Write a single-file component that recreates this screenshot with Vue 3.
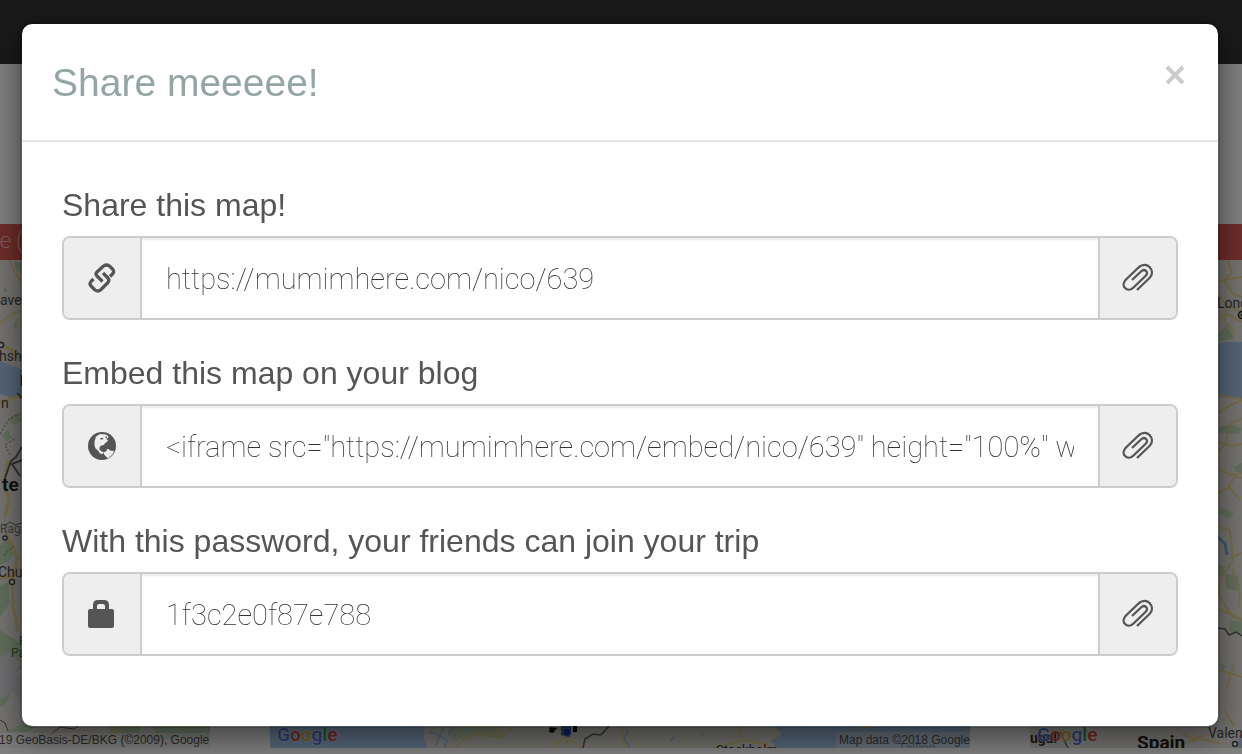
<script setup>
import { reactive } from 'vue'

const fields = reactive([
  { id: 'share', label: 'Share this map!', icon: 'link', value: 'https://mumimhere.com/nico/639' },
  {
    id: 'embed',
    label: 'Embed this map on your blog',
    icon: 'globe',
    value: '<iframe src="https://mumimhere.com/embed/nico/639" height="100%" width="100%"></iframe>'
  },
  { id: 'password', label: 'With this password, your friends can join your trip', icon: 'lock', value: '1f3c2e0f87e788' }
])
</script>

<template>
  <div class="page">
    <div class="nav"></div>
    <div class="intro"></div>
    <div class="banner">e (</div>
    <div class="maps">
      <svg class="map left" viewBox="0 260 210 488" preserveAspectRatio="xMinYMin slice" aria-hidden="true">
        <rect y="260" width="210" height="488" fill="#e9e7e1" />
        <g fill="#c3dcb8">
          <path d="M14 262l8 0 0 12-6-4zM4 287l4 4-4 2zM13 325l6-8-3 14zM8 420l10-8 4 9-8 4zM2 435l6-5 4 8-6 3zM0 545l9-6 7 14-8 8-8 4zM0 586l8-4 2 20-10 16zM0 630l22 14 0 24-10 8-12 4zM0 682l9-8 5 14-9 17-5 2z" />
          <path d="M6 732l16-8 14 2-8 6z" />
          <path d="M110 726h30v7h-30zM150 726h60v12h-50z" />
        </g>
        <path d="M0 361l16 6 6 3v27l-8 1-14-4z" fill="#aacbef" />
        <path d="M0 657l10-5 12 12-8 7 8 9v20l-9-8-13 8z" fill="#dcdce0" />
        <g fill="none" stroke="#ecd692" stroke-width="2">
          <path d="M9 260l6 12 7 11M0 323l12-9 10-3M0 341l6 5 16 10M2 347l9 3 4 6 7 2" />
          <path d="M8 460l-4 24 5 15-4 18M12 584l5-26-5-13-8-14M0 578l12-1 1 29 5 25" stroke-width="3" />
          <path d="M0 403l12-5 10-2M112 735l8-9" stroke-width="3" />
        </g>
        <g fill="none" stroke="#66635c" stroke-width="2">
          <path d="M17 393l5 5M5 478l6-17 5-4 6-10M22 460l-10 4 8 12" />
          <path d="M4 526l6-4 5 3 7-2M0 720l5 3 3 8M50 735l10-8 14 2 8-6" stroke-width="1" />
        </g>
        <g fill="none" stroke="#77756d" stroke-width="1" stroke-dasharray="2 2">
          <path d="M0 434l9-15 13-6M4 555l10-9M10 455l-5-10 11-7" />
        </g>
        <g fill="#fff" stroke="#444" stroke-width="1.5">
          <circle cx="1" cy="345" r="2.5" /><circle cx="5" cy="538" r="2" /><circle cx="12" cy="582" r="2.5" />
        </g>
        <g class="map-label">
          <text x="0" y="305">aven</text>
          <text x="-1" y="361">hsh</text>
          <text x="1" y="408">n</text>
          <text x="20" y="386" class="bold">I</text>
          <text x="2" y="491" class="country">te</text>
          <text x="0" y="533" class="minor">Raga</text>
          <text x="-2" y="577">Chur</text>
          <text x="19" y="645" class="park">P</text>
          <text x="11" y="657" class="park">Pa</text>
        </g>
        <rect y="733" width="210" height="15" fill="#fff" opacity=".55" />
        <text x="-1" y="744" class="credit">19 GeoBasis-DE/BKG (©2009), Google</text>
      </svg>
      <svg class="map middle" viewBox="270 260 700 488" preserveAspectRatio="xMinYMax slice" aria-hidden="true">
        <rect x="270" y="260" width="700" height="488" fill="#e0dfd6" />
        <path d="M270 260h158l-4 480 4 8H270zM774 726l8 8-11 7 6 7h193v-22z" fill="#aacbef" />
        <path d="M446 726h46l16 7-6 6-30-4-18 6zM548 726h24l-6 8z" fill="#ceddbf" />
        <g fill="none" stroke="#aacbef" stroke-width="2">
          <path d="M430 732l10 4-5 10M444 728l-5 8 8 4-3 8M455 726l-7 8M628 730l-4 9 6 8M670 741l5-4M700 734l3 2" />
        </g>
        <g fill="none" stroke="#ecd692" stroke-width="2">
          <path d="M455 748l11-10 14-5 18 4 14-8M500 726l-4 11M552 748l14-12 2 12M620 726l5 22M738 726l6 14 24 5M570 739l12 9M713 748l31-8M860 728l20-4" />
        </g>
        <path d="M609 726l-8 9-8-1-8 5-2 9" fill="none" stroke="#666" stroke-width="1.5" />
        <path d="M550 727l7 1-4 5-4-1zM573 726h4v6h-4z" fill="#111" />
        <path d="M561 726h10v8l-2 3-8-2z" fill="#3974b5" />
        <circle cx="567" cy="732" r="4" fill="#2233aa" stroke="#5a80d8" />
        <g class="google">
          <text x="277" y="741"><tspan fill="#4e7fe8">G</tspan><tspan fill="#e34b40">o</tspan><tspan fill="#edba32">o</tspan><tspan fill="#4e7fe8">g</tspan><tspan fill="#37a456">l</tspan><tspan fill="#e34b40">e</tspan></text>
        </g>
        <text x="716" y="754" class="city">Stockholm</text>
        <rect x="836" y="732" width="134" height="16" fill="#dce4ec" opacity=".65" />
        <text x="898" y="752" class="faded">Tallinn</text>
        <text x="839" y="744" class="credit">Map data ©2018 Google</text>
      </svg>
      <svg class="map right" viewBox="1030 260 212 488" preserveAspectRatio="xMaxYMin slice" aria-hidden="true">
        <rect x="1030" y="260" width="212" height="488" fill="#e9e7e1" />
        <path d="M1218 344l8-2 16 0v57l-12-2-12 1zM1239 735h3v13h-4z" fill="#aacbef" />
        <path d="M1218 334l8-9 9 13-17 4zM1218 427l13-3 11 5-4 5-20-1zM1220 508l8 2 6 4-5 4-11-4zM1234 467l8-4v9h-6zM1225 574l13 2 2 15-14-2zM1218 564l7 3-2 8-5 2zM1229 620l13 2v12l-12-3zM1219 662l7 4-3 6z" fill="#c3dcb8" />
        <g fill="none" stroke="#ecd692" stroke-width="2">
          <path d="M1228 260l4 13-8 8 9 13 9 3M1218 281l24-4M1218 293l8 12 16 7M1218 319l9-5 15 8M1227 305l-3 16 10 10M1218 395l10 2 14 2M1218 413l13-8 11-5M1218 442l12 4 12-2M1218 453l8-11 4-18 12-5M1218 469l13 6 11-2" />
          <path d="M1218 493l10-5 7-12 7 2M1229 487l11 13M1218 527l12 3 3 30-13 20-2 16M1230 558l12-5M1232 568l8 30-2 10M1218 594l14 22 10 5M1218 609l24 10M1218 670l14 4 10 3M1224 710l11 17M1234 664l-7 23" />
          <path d="M1050 738l14-8 12 8 12-8M1176 748l20-10 24 5M1182 733l12 8 10-6" />
        </g>
        <path d="M1218 537l7 7 2 11" fill="none" stroke="#86b0e4" stroke-width="3" />
        <path d="M1218 628l7 1 4 6 7-3 6 4M1060 732l8 16" fill="none" stroke="#666" stroke-width="1.5" />
        <circle cx="1242" cy="315" r="3.5" fill="#ddd" stroke="#222" stroke-width="1.5" />
        <circle cx="1242" cy="315" r="1.5" fill="#222" />
        <circle cx="1235" cy="744" r="2.5" fill="#fff" stroke="#444" stroke-width="1.5" />
        <g class="map-label">
          <text x="1217" y="308">London</text>
          <text x="1208" y="738">Valencia</text>
          <text x="1137" y="749" class="country">Spain</text>
          <text x="1030" y="743" class="bold">ugal</text>
        </g>
        <g class="google">
          <text x="1037" y="741"><tspan fill="#4e7fe8">G</tspan><tspan fill="#e34b40">o</tspan><tspan fill="#edba32">o</tspan><tspan fill="#4e7fe8">g</tspan><tspan fill="#37a456">l</tspan><tspan fill="#e34b40">e</tspan></text>
        </g>
      </svg>
    </div>
  </div>

  <div class="backdrop">
    <section class="modal" role="dialog" aria-modal="true" aria-labelledby="share-title">
      <header class="modal-header">
        <h1 id="share-title">Share meeeee!</h1>
        <button class="close" type="button" aria-label="Close">
          <svg viewBox="0 0 20 20" aria-hidden="true"><path d="M2 2l16 16M18 2l-16 16" /></svg>
        </button>
      </header>
      <form class="modal-body" @submit.prevent>
        <div v-for="field in fields" :key="field.id" class="field">
          <label :for="field.id">{{ field.label }}</label>
          <div class="input-group">
            <span class="addon">
              <svg v-if="field.icon === 'link'" class="icon" viewBox="0 0 32 32" aria-hidden="true">
                <g fill="none" stroke="#555" stroke-width="3.2" stroke-linejoin="round">
                  <path d="M16.500 19.500L11 14Q9 12 11 10L17.500 4Q20.500 2 23.500 4L27 7.500Q28.500 10 26.500 12L24 14.500" />
                  <path d="M7.500 17L5 19.500Q3 22 5 24L9 28Q12 30 14.500 28L21.500 21Q24 18.500 22 16L17 11" />
                </g>
              </svg>
              <svg v-else-if="field.icon === 'globe'" class="icon" viewBox="0 0 32 32" aria-hidden="true">
                <circle cx="16" cy="16" r="14" fill="#555" />
                <path d="M10 6.500l4-2.500 6 .5 2.500 2-.5 1.500-2 1 2 1-1 2-2 1-1 2-3 .5-1.500 2 0 2 2 2 2 .5-.5 2-3-.5-2-3-2.500-2-1-3 0-4zM17.500 22.500l3-1.500.500-2 1.500 0 1.500 1.500 4 .5-1.500 3.500-4.500 4-3.500-3.500z" fill="#eee" />
                <path d="M14.500 8l3 0-1 1.500-2 0zM19.500 6.500l1.500 0 0 1.500-1.500 0z" fill="#555" />
              </svg>
              <svg v-else class="icon" viewBox="0 0 32 32" aria-hidden="true">
                <path fill="#555" fill-rule="evenodd" d="M4 11h3V7q0-5 5-5h6q5 0 5 5v4h3q2 0 2 2v15q0 2-2 2H4q-2 0-2-2V13q0-2 2-2zm7 0h8V8q0-2-2-2h-4q-2 0-2 2z" />
              </svg>
            </span>
            <input :id="field.id" v-model="field.value" type="text" spellcheck="false" />
            <button class="addon copy" type="button" :aria-label="'Copy: ' + field.label">
              <svg class="icon" viewBox="0 0 32 32" aria-hidden="true">
                <path fill="none" stroke="#555" stroke-width="2.300" d="M15 28L27.500 16C31 12.500 30.500 8 27.500 5C24.500 2 20 2.500 17 5L4 17.500C1 20.500 1 24 3 26C5.500 28.500 9 28 11.500 25.500L23.500 14C25.500 12 25.500 10 24 8.800C22.500 7.500 20.500 8 19 9.500L10 18" />
              </svg>
            </button>
          </div>
        </div>
      </form>
    </section>
  </div>
</template>

<style>
html,
body {
  margin: 0;
  overflow: hidden;
}
</style>

<style scoped>
* {
  box-sizing: border-box;
}

.page {
  display: flex;
  flex-direction: column;
  height: 100vh;
  padding-bottom: 6px;
  background: #fff;
  overflow: hidden;
  font-family: "Liberation Sans", Arial, sans-serif;
}

.nav {
  flex: 0 0 64px;
  background: #333;
}

.intro {
  flex: 0 0 160px;
}

.banner {
  flex: 0 0 36px;
  background: #dc5a55;
  color: #fff;
  font: 100 22px/34px Roboto, sans-serif;
  white-space: nowrap;
}

.maps {
  display: flex;
  flex: 1;
  gap: 60px;
  min-height: 0;
}

.map {
  display: block;
  height: 100%;
  min-width: 0;
}

.left {
  flex: 210 1 0;
}

.middle {
  flex: 700 1 0;
}

.right {
  flex: 212 1 0;
}

.map-label {
  font: 14px Roboto, sans-serif;
  fill: #4a4a4a;
}

.bold {
  font-weight: 700;
  fill: #333;
}

.country {
  font-size: 19px;
  font-weight: 700;
  fill: #222;
}

.minor {
  font-size: 12px;
  fill: #777;
}

.park {
  font-size: 12px;
  fill: #3c7a44;
}

.credit {
  font: 12px "Liberation Sans", Arial, sans-serif;
  fill: #555;
}

.city {
  font: 13px Roboto, sans-serif;
  fill: #333;
}

.faded {
  font: 13px Roboto, sans-serif;
  fill: #999;
}

.google {
  font: 500 19px Roboto, sans-serif;
  stroke: #fff;
  stroke-width: 2px;
  stroke-opacity: 0.4;
  paint-order: stroke;
}

.backdrop {
  position: fixed;
  inset: 0;
  padding: 22px 22px 0 20px;
  overflow: hidden;
  background: rgba(0, 0, 0, 0.5);
}

.modal {
  border: 2px solid rgba(0, 0, 0, 0.2);
  border-radius: 12px;
  background: #fff;
  background-clip: padding-box;
  box-shadow: 0 10px 30px rgba(0, 0, 0, 0.5);
  font-family: "Liberation Sans", Arial, sans-serif;
}

.modal-header {
  display: flex;
  align-items: flex-start;
  justify-content: space-between;
  height: 118px;
  padding: 30px;
  border-bottom: 2px solid #e5e5e5;
}

h1 {
  margin: 0;
  color: #95a5a6;
  font-size: 39px;
  font-weight: 400;
  line-height: 58px;
}

.close {
  width: 26px;
  height: 42px;
  padding: 0;
  border: 0;
  background: none;
}

.close svg {
  display: block;
  width: 20px;
  height: 20px;
  margin: 0 auto;
  fill: none;
  stroke: #ccc;
  stroke-width: 4px;
}

.modal-body {
  padding: 40px;
}

.field {
  margin-bottom: 30px;
}

label {
  display: block;
  margin-bottom: 8px;
  color: #555;
  font-size: 32px;
  line-height: 46px;
  white-space: nowrap;
}

.input-group {
  display: flex;
  height: 84px;
  border: 2px solid #ccc;
  border-radius: 8px;
  overflow: hidden;
}

.addon {
  display: flex;
  flex: 0 0 78px;
  align-items: center;
  justify-content: center;
  padding: 0;
  border: 0;
  border-right: 2px solid #ccc;
  background: #eee;
}

.copy {
  border-right: 0;
  border-left: 2px solid #ccc;
}

.icon {
  width: 32px;
  height: 32px;
}

input {
  flex: 1;
  min-width: 0;
  padding: 2px 24px 0;
  border: 0;
  outline: 0;
  background: #fff;
  box-shadow: inset 0 2px 2px rgba(0, 0, 0, 0.075);
  color: #333;
  font: 100 29px Roboto, "Liberation Sans", sans-serif;
}
</style>
